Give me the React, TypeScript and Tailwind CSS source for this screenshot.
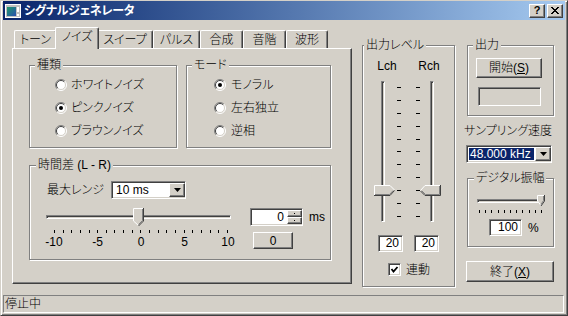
import React from 'react';

// classic 3D edges
const raised = 'border border-t-white border-l-white border-r-[#404040] border-b-[#404040] shadow-[inset_-1px_-1px_0_#808080]';
const sunken = 'border border-t-[#808080] border-l-[#808080] border-r-white border-b-white shadow-[inset_1px_1px_0_#404040,inset_-1px_-1px_0_#d4d0c8]';

function Group({ title, className, legendLeft = 'left-[5px]', children }: { title: string; className: string; legendLeft?: string; children?: React.ReactNode }) {
  return (
    <div className={`relative border border-[#808080] shadow-[inset_1px_1px_0_#fff,1px_1px_0_#fff] ${className}`}>
      <span className={`absolute top-[-8px] ${legendLeft} bg-[#d4d0c8] px-[2px] leading-[14px] whitespace-nowrap`}>{title}</span>
      {children}
    </div>
  );
}

function Radio({ checked }: { checked?: boolean }) {
  return (
    <svg width="12" height="12" viewBox="0 0 12 12" className="shrink-0">
      <circle cx="6" cy="6" r="5" fill="#fff" />
      <path d="M2.1 9.9 A5.5 5.5 0 0 1 9.9 2.1" stroke="#808080" fill="none" />
      <path d="M9.9 2.1 A5.5 5.5 0 0 1 2.1 9.9" stroke="#fff" fill="none" />
      <path d="M2.8 9.2 A4.5 4.5 0 0 1 9.2 2.8" stroke="#404040" fill="none" />
      <path d="M9.2 2.8 A4.5 4.5 0 0 1 2.8 9.2" stroke="#d4d0c8" fill="none" />
      {checked && <circle cx="6" cy="6" r="2" fill="#000" />}
    </svg>
  );
}

function DownArrow() {
  return (
    <svg width="7" height="4" viewBox="0 0 7 4">
      <polygon points="0,0 7,0 3.5,4" fill="#000" />
    </svg>
  );
}

function ThumbDown({ w = 11, h = 18 }: { w?: number; h?: number }) {
  const b = h - 5;
  const m = w / 2;
  return (
    <svg width={w} height={h} viewBox={`0 0 ${w} ${h}`}>
      <polygon points={`0,0 ${w},0 ${w},${b} ${m},${h} 0,${b}`} fill="#d4d0c8" />
      <path d={`M0.5 ${b} V0.5 H${w - 1} M0.5 ${b} L${m} ${h - 0.5}`} stroke="#fff" fill="none" />
      <path d={`M${w - 0.5} 0 V${b} L${m} ${h}`} stroke="#404040" fill="none" />
      <path d={`M${w - 1.5} 1 V${b - 0.5} L${m} ${h - 1.5}`} stroke="#808080" fill="none" />
    </svg>
  );
}

function ThumbRight() {
  return (
    <svg width="21" height="11" viewBox="0 0 21 11">
      <polygon points="0,0 16,0 21,5.5 16,11 0,11" fill="#d4d0c8" />
      <path d="M0.5 11 V0.5 H16 L20.5 5" stroke="#fff" fill="none" />
      <path d="M20.5 5.5 L16 10.5 H0" stroke="#404040" fill="none" />
      <path d="M19.2 5.5 L15.5 9.5 H1" stroke="#808080" fill="none" />
    </svg>
  );
}

function ThumbLeft() {
  return (
    <svg width="21" height="11" viewBox="0 0 21 11">
      <polygon points="5,0 21,0 21,11 5,11 0,5.5" fill="#d4d0c8" />
      <path d="M0.5 5.5 L5 0.5 H20.5" stroke="#fff" fill="none" />
      <path d="M20.5 0 V10.5 H5 L0.5 6" stroke="#404040" fill="none" />
      <path d="M19.5 1 V9.5 H5.5 L1.8 5.8" stroke="#808080" fill="none" />
    </svg>
  );
}

const TABS = [
  { label: 'トーン', w: 'w-[43px]' },
  { label: 'ノイズ', w: 'w-[40px]', active: true },
  { label: 'スイープ', w: 'w-[56px]' },
  { label: 'パルス', w: 'w-[47px]' },
  { label: '合成', w: 'w-[43px]' },
  { label: '音階', w: 'w-[43px]' },
  { label: '波形', w: 'w-[42px]' },
];

function TimeGroup() {
  const ticks = Array.from({ length: 21 });
  return (
    <Group title="時間差 (L - R)" className="w-[302px] h-[95px] mt-[17px]" legendLeft="left-[6px]">
      <div className="flex items-center mt-[15px] h-[18px]">
        <span className="ml-[17px] w-[64px]">最大レンジ</span>
        <div className={`${sunken} w-[75px] h-[18px] bg-white flex items-center`}>
          <span className="flex-1 pl-[4px]">10 ms</span>
          <div className={`${raised} w-[16px] h-[14px] bg-[#d4d0c8] flex items-center justify-center`}>
            <DownArrow />
          </div>
        </div>
      </div>
      <div className="flex mt-[9px]">
        <div className="ml-[16px] w-[185px]">
          <div className="relative h-[18px] flex items-center">
            <div className="w-full h-[4px] border border-t-[#808080] border-l-[#808080] border-b-white border-r-white shadow-[inset_1px_1px_0_#404040]" />
            <div className="absolute left-[87px] top-0">
              <ThumbDown />
            </div>
          </div>
          <div className="ml-[8px] w-[174px] h-[3px] mt-[4px] flex justify-between">
            {ticks.map((_, i) => (
              <div key={i} className="w-px h-[3px] bg-black" />
            ))}
          </div>
          <div className="ml-[-2px] w-[194px] mt-[3px] flex justify-between leading-[12px]">
            {['-10', '-5', '0', '5', '10'].map((t) => (
              <span key={t} className="w-[20px] text-center">{t}</span>
            ))}
          </div>
        </div>
        <div className="ml-[19px] flex flex-col">
          <div className="flex items-center">
            <div className={`${sunken} w-[53px] h-[18px] bg-white flex items-center`}>
              <span className="flex-1 text-right pr-[3px]">0</span>
              <div className="flex flex-col w-[15px] h-[14px]">
                <div className={`${raised} h-[7px] bg-[#d4d0c8] flex items-center justify-center`}>
                  <div className="w-px h-px bg-black" />
                </div>
                <div className={`${raised} h-[7px] bg-[#d4d0c8] flex items-center justify-center`}>
                  <div className="w-px h-px bg-black" />
                </div>
              </div>
            </div>
            <span className="ml-[6px]">ms</span>
          </div>
          <div className={`${raised} ml-[3px] mt-[6px] w-[40px] h-[17px] flex items-center justify-center`}>0</div>
        </div>
      </div>
    </Group>
  );
}

function LevelGroup() {
  const ticks = Array.from({ length: 11 });
  const TickCol = () => (
    <div className="w-[4px] pt-[6px] h-[136px] flex flex-col justify-between">
      {ticks.map((_, i) => (
        <div key={i} className="w-[4px] h-px bg-black" />
      ))}
    </div>
  );
  return (
    <Group title="出力レベル" className="w-[93px] h-[242px] mt-[25px] ml-[10px] flex flex-col" legendLeft="left-[1px]">
      <div className="flex mt-[14px] h-[12px] leading-[12px]">
        <span className="ml-[13px] w-[22px] text-center">Lch</span>
        <span className="ml-[20px] w-[22px] text-center">Rch</span>
      </div>
      <div className="flex mt-[9px] h-[141px]">
        <div className="relative ml-[11px] w-[21px] h-full">
          <div className="ml-[7px] w-[4px] h-full border border-t-[#808080] border-l-[#808080] border-b-white border-r-white shadow-[inset_1px_1px_0_#404040]" />
          <div className="absolute left-0 top-[104px]"><ThumbRight /></div>
        </div>
        <div className="ml-[2px]"><TickCol /></div>
        <div className="ml-[15px]"><TickCol /></div>
        <div className="relative w-[21px] h-full">
          <div className="ml-[10px] w-[4px] h-full border border-t-[#808080] border-l-[#808080] border-b-white border-r-white shadow-[inset_1px_1px_0_#404040]" />
          <div className="absolute left-0 top-[104px]"><ThumbLeft /></div>
        </div>
      </div>
      <div className="flex mt-[13px]">
        <div className={`${sunken} ml-[15px] w-[25px] h-[17px] bg-white text-right pr-[3px] leading-[15px]`}>20</div>
        <div className={`${sunken} ml-[11px] w-[25px] h-[17px] bg-white text-right pr-[3px] leading-[15px]`}>20</div>
      </div>
      <div className="flex items-center mt-[11px] ml-[25px]">
        <div className={`${sunken} w-[13px] h-[13px] bg-white flex items-center justify-center`}>
          <svg width="9" height="9" viewBox="0 0 9 9">
            <polyline points="1.5,4 3.5,6.5 7.5,2" stroke="#000" strokeWidth="1.8" fill="none" />
          </svg>
        </div>
        <span className="ml-[5px]">連動</span>
      </div>
    </Group>
  );
}

function RightColumn() {
  const ticks = Array.from({ length: 11 });
  return (
    <div className="ml-[12px] mt-[25px] w-[87px] flex flex-col">
      <Group title="出力" className="w-[87px] h-[71px]" legendLeft="left-[5px]">
        <div className={`${raised} ml-[8px] mt-[12px] w-[66px] h-[20px] flex items-center justify-center`}>
          開始(<u>S</u>)
        </div>
        <div className={`${sunken} ml-[10px] mt-[9px] w-[63px] h-[19px]`} />
      </Group>
      <span className="-ml-[3px] mt-[8px] leading-[14px] whitespace-nowrap">サンプリング速度</span>
      <div className={`${sunken} -ml-px mt-[7px] w-[86px] h-[18px] bg-white flex items-center pl-[2px]`}>
        <span className="flex-1 h-[12px] bg-[#0a246a] text-white leading-[12px] pl-[1px] mr-[1px]">48.000 kHz</span>
        <div className={`${raised} w-[16px] h-[14px] bg-[#d4d0c8] flex items-center justify-center`}>
          <DownArrow />
        </div>
      </div>
      <Group title="デジタル振幅" className="w-[87px] h-[69px] mt-[15px]" legendLeft="left-[6px]">
        <div className="relative ml-[9px] mt-[16px] w-[67px] h-[11px] flex items-center">
          <div className="w-full h-[4px] border border-t-[#808080] border-l-[#808080] border-b-white border-r-white shadow-[inset_1px_1px_0_#404040]" />
          <div className="absolute left-[60px] top-0">
            <ThumbDown w={8} h={11} />
          </div>
        </div>
        <div className="ml-[11px] mt-[4px] w-[63px] h-[3px] flex justify-between">
          {ticks.map((_, i) => (
            <div key={i} className="w-px h-[3px] bg-black" />
          ))}
        </div>
        <div className="flex items-center mt-[6px]">
          <div className={`${sunken} ml-[21px] w-[33px] h-[17px] bg-white text-right pr-[3px] leading-[15px]`}>100</div>
          <span className="ml-[6px]">%</span>
        </div>
      </Group>
      <div className={`${raised} -ml-px mt-[14px] w-[88px] h-[21px] flex items-center justify-center`}>
        終了(<u>X</u>)
      </div>
    </div>
  );
}

export default function App() {
  return (
    <div className="w-[568px] h-[316px] bg-[#d4d0c8] flex flex-col text-[12px] leading-none font-light text-black font-['Liberation_Sans','Noto_Sans_CJK_JP',sans-serif] [font-feature-settings:'palt'] overflow-hidden border border-t-[#d4d0c8] border-l-[#d4d0c8] border-r-[#404040] border-b-[#404040] shadow-[inset_1px_1px_0_#fff,inset_-1px_-1px_0_#808080] p-[2px]">
      {/* title bar */}
      <div className="-mt-[2px] h-[19px] shrink-0 flex items-center bg-linear-to-r from-[#0a246a] to-[#a6caf0]">
        <svg width="16" height="16" viewBox="0 0 16 16" className="ml-[2px]">
          <defs>
            <linearGradient id="ic" x1="0" y1="0" x2="1" y2="1">
              <stop offset="0" stopColor="#1f9a6a" />
              <stop offset="1" stopColor="#2a4fb0" />
            </linearGradient>
          </defs>
          <rect x="0.5" y="1.5" width="15" height="13" fill="#c0c0c0" stroke="#fff" />
          <rect x="2" y="4" width="9" height="9" fill="url(#ic)" />
          <rect x="12" y="4" width="2" height="5" fill="#fff" />
          <rect x="12" y="11" width="2" height="2" fill="#fff" />
        </svg>
        <span className="ml-[3px] text-white font-bold text-[12px] tracking-[-0.3px]">シグナルジェネレータ</span>
        <div className="ml-auto flex mr-[2px]">
          <div className={`${raised} bg-[#d4d0c8] w-[16px] h-[14px] flex items-center justify-center font-bold text-[11px] leading-[11px]`}>?</div>
          <div className={`${raised} bg-[#d4d0c8] w-[16px] h-[14px] ml-[2px] flex items-center justify-center`}>
            <svg width="8" height="7" viewBox="0 0 8 7">
              <path d="M0 0 L7 7 M1 0 L8 7 M7 0 L0 7 M8 0 L1 7" stroke="#000" strokeWidth="1" />
            </svg>
          </div>
        </div>
      </div>

      {/* body */}
      <div className="flex h-[275px] shrink-0">
        <div className="ml-[9px] mt-[7px] w-[340px] flex flex-col">
          <div className="flex items-end h-[21px] pl-[2px]">
            {TABS.map((t) =>
              t.active ? (
                <div
                  key={t.label}
                  className="relative z-10 -mx-[2px] -mb-px w-[44px] h-[22px] bg-[#d4d0c8] border-t border-l border-r border-t-white border-l-white border-r-[#404040] rounded-t-[2px] shadow-[inset_-1px_0_0_#808080] flex justify-center pt-[3px]"
                >
                  {t.label}
                </div>
              ) : (
                <div
                  key={t.label}
                  className={`${t.w} h-[18px] border-t border-l border-r border-t-white border-l-white border-r-[#404040] rounded-t-[2px] shadow-[inset_-1px_0_0_#808080] flex justify-center pt-[3px]`}
                >
                  {t.label}
                </div>
              )
            )}
          </div>
          <div className="h-[236px] border border-t-white border-l-white border-r-[#404040] border-b-[#404040] shadow-[inset_-1px_-1px_0_#808080] pl-[16px] pt-[16px]">
            <div className="flex gap-[9px]">
              <Group title="種類" className="w-[148px] h-[83px] flex flex-col gap-[10px] pt-[12px]">
                {[
                  ['ホワイトノイズ', false],
                  ['ピンクノイズ', true],
                  ['ブラウンノイズ', false],
                ].map(([l, c]) => (
                  <div key={l as string} className="flex items-center h-[13px] ml-[25px]">
                    <Radio checked={c as boolean} />
                    <span className="ml-[4px]">{l as string}</span>
                  </div>
                ))}
              </Group>
              <Group title="モード" className="w-[145px] h-[83px] flex flex-col gap-[10px] pt-[12px]">
                {[
                  ['モノラル', true],
                  ['左右独立', false],
                  ['逆相', false],
                ].map(([l, c]) => (
                  <div key={l as string} className="flex items-center h-[13px] ml-[27px]">
                    <Radio checked={c as boolean} />
                    <span className="ml-[5px]">{l as string}</span>
                  </div>
                ))}
              </Group>
            </div>
            <TimeGroup />
          </div>
        </div>
        <LevelGroup />
        <RightColumn />
      </div>

      {/* status bar */}
      <div className="h-[18px] shrink-0 border border-t-[#808080] border-l-[#808080] border-b-white border-r-white flex items-center pl-[1px] mr-[1px]">
        停止中
      </div>
    </div>
  );
}
